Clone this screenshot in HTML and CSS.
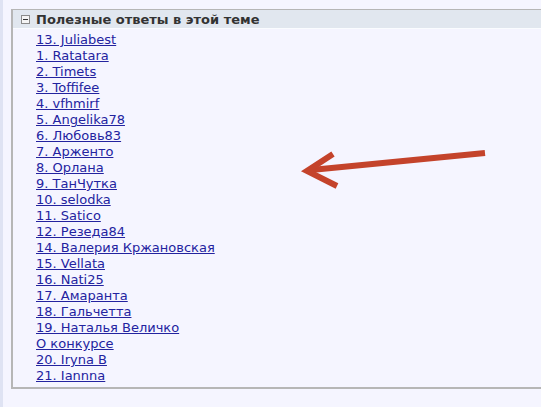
FILE: index.html
```html
<!DOCTYPE html>
<html lang="ru">
<head>
    <meta charset="UTF-8">
    <title>Полезные ответы в этой теме</title>
    <link rel="stylesheet" href="styles.css">
</head>
<body>
    <div class="page">
        <div class="block">
            <div class="block-head">
                <span class="toggle"></span>
                Полезные ответы в этой теме
            </div>
            <ul class="answers">
                <li><a href="#">13. Juliabest</a></li>
                <li><a href="#">1. Ratatara</a></li>
                <li><a href="#">2. Timets</a></li>
                <li><a href="#">3. Toffifee</a></li>
                <li><a href="#">4. vfhmirf</a></li>
                <li><a href="#">5. Angelika78</a></li>
                <li><a href="#">6. Любовь83</a></li>
                <li><a href="#">7. Арженто</a></li>
                <li><a href="#">8. Орлана</a></li>
                <li><a href="#">9. ТанЧутка</a></li>
                <li><a href="#">10. selodka</a></li>
                <li><a href="#">11. Satico</a></li>
                <li><a href="#">12. Резеда84</a></li>
                <li><a href="#">14. Валерия Кржановская</a></li>
                <li><a href="#">15. Vellata</a></li>
                <li><a href="#">16. Nati25</a></li>
                <li><a href="#">17. Амаранта</a></li>
                <li><a href="#">18. Гальчетта</a></li>
                <li><a href="#">19. Наталья Величко</a></li>
                <li><a href="#">О конкурсе</a></li>
                <li><a href="#">20. Iryna B</a></li>
                <li><a href="#">21. Iannna</a></li>
            </ul>
            <svg class="arrow" width="200" height="50" viewBox="0 0 200 50">
                <path d="M186 11 L12 28" stroke="#c4432b" stroke-width="6" fill="none"/>
                <path d="M34 12 L8 29 L38 44" stroke="#c4432b" stroke-width="6" fill="none" stroke-linejoin="miter"/>
            </svg>
        </div>
    </div>
</body>
</html>
```

FILE: styles.css
```css
body {
    margin: 0;
    background: #f5f5ff;
    font-family: "DejaVu Sans", Verdana, sans-serif;
    overflow: hidden;
}
.page {
    border-left: 3px solid #dfe3f3;
    padding: 9px 0 20px 8px;
    min-height: 407px;
    box-sizing: border-box;
    overflow: hidden;
}
.block {
    position: relative;
    margin-right: -40px;
    border: 2px solid #b6b6b6;
    border-top-width: 1px;
}
.block-head {
    display: flex;
    align-items: center;
    gap: 6px;
    height: 18px;
    padding-left: 8px;
    background: #e1e7ef;
    border-bottom: 1px solid #fafcff;
    font-size: 13px;
    font-weight: bold;
    color: #333333;
}
.toggle {
    position: relative;
    width: 7px;
    height: 7px;
    border: 1px solid #8a8a8a;
    background: #f4f4f4;
}
.toggle::after {
    content: "";
    position: absolute;
    left: 1px;
    top: 3px;
    width: 5px;
    height: 1px;
    background: #333333;
}
.answers {
    list-style: none;
    margin: 0;
    padding: 3px 0 3px 23px;
    font-size: 13px;
    line-height: 16px;
}
.answers a {
    color: #23239f;
}
.arrow {
    position: absolute;
    left: 286px;
    top: 132px;
}
```
